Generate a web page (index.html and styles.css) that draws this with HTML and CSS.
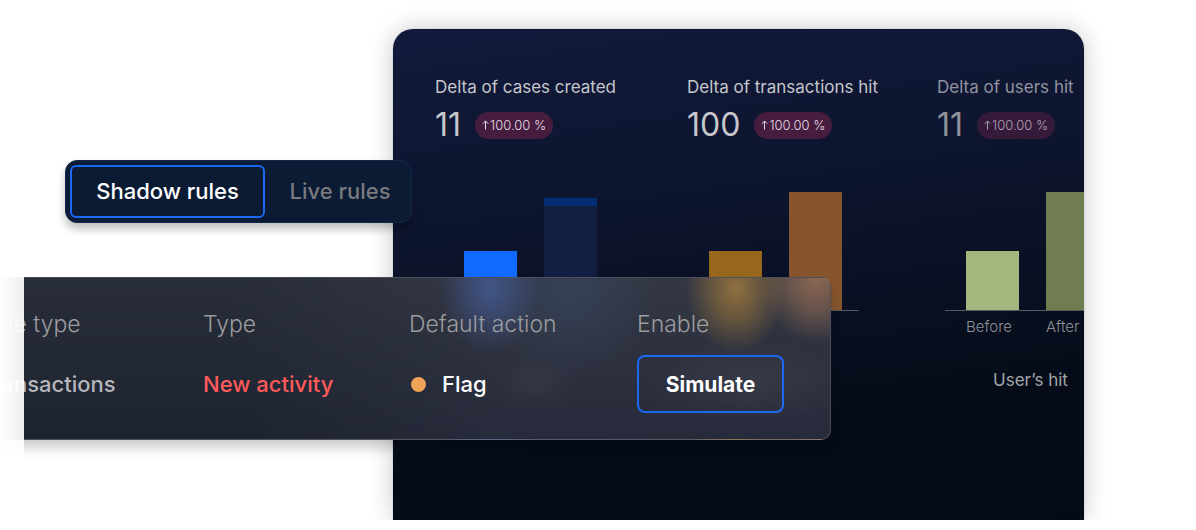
FILE: index.html
```html
<!DOCTYPE html>
<html lang="en">
<head>
    <meta charset="UTF-8">
    <meta name="viewport" content="width=device-width, initial-scale=1.0">
    <title>Shadow rules</title>
    <link rel="stylesheet" href="styles.css">
</head>
<body>

    <div class="hero">
        <!-- Simulation results -->
        <section class="panel">
            <div class="stats">
                <div class="stat">
                    <h2>Delta of cases created</h2>
                    <div class="stat-row">
                        <span class="stat-value">11</span>
                        <span class="badge"><svg viewBox="0 0 7 10" aria-hidden="true"><path d="M3.500 9.500V1M.7 3.800L3.500 1l2.800 2.800"/></svg>100.00 %</span>
                    </div>
                </div>
                <div class="stat">
                    <h2>Delta of transactions hit</h2>
                    <div class="stat-row">
                        <span class="stat-value">100</span>
                        <span class="badge"><svg viewBox="0 0 7 10" aria-hidden="true"><path d="M3.500 9.500V1M.7 3.800L3.500 1l2.800 2.800"/></svg>100.00 %</span>
                    </div>
                </div>
                <div class="stat faded">
                    <h2>Delta of users hit</h2>
                    <div class="stat-row">
                        <span class="stat-value">11</span>
                        <span class="badge"><svg viewBox="0 0 7 10" aria-hidden="true"><path d="M3.500 9.500V1M.7 3.800L3.500 1l2.800 2.800"/></svg>100.00 %</span>
                    </div>
                </div>
            </div>

            <div class="charts">
                <div class="chart">
                    <div class="bars">
                        <div class="bar blue" style="height: 50%"></div>
                        <div class="bar navy" style="height: 95%"></div>
                    </div>
                </div>
                <div class="chart">
                    <div class="bars">
                        <div class="bar amber" style="height: 50%"></div>
                        <div class="bar brown" style="height: 100%"></div>
                    </div>
                </div>
                <div class="chart">
                    <div class="bars">
                        <div class="bar green" style="height: 50%"></div>
                        <div class="bar olive" style="height: 100%"></div>
                    </div>
                    <div class="labels">
                        <span>Before</span>
                        <span>After</span>
                    </div>
                    <p class="caption">User’s hit</p>
                </div>
            </div>
        </section>

        <!-- Rule row over the panel -->
        <div class="rule-card">
            <table>
                <colgroup>
                    <col class="col-rule">
                    <col class="col-type">
                    <col class="col-action">
                    <col>
                </colgroup>
                <thead>
                    <tr>
                        <th>Rule type</th>
                        <th>Type</th>
                        <th>Default action</th>
                        <th>Enable</th>
                    </tr>
                </thead>
                <tbody>
                    <tr>
                        <td class="muted">Transactions</td>
                        <td class="new">New activity</td>
                        <td><span class="flag">Flag</span></td>
                        <td><button class="simulate" type="button">Simulate</button></td>
                    </tr>
                </tbody>
            </table>
        </div>
        <div class="edge-fade"></div>

        <div class="tabs">
            <button class="tab active" type="button">Shadow rules</button>
            <button class="tab" type="button">Live rules</button>
        </div>
    </div>

</body>
</html>
```
FILE: styles.css
```css
* {
    box-sizing: border-box;
}

body {
    margin: 0;
    background-color: #fff;
    font-family: "Inter", "Liberation Sans", sans-serif;
    color: #c6c7cc;
}

button {
    font-family: inherit;
    background: none;
    cursor: pointer;
}

.hero {
    position: relative;
    padding: 29px 112px 0 393px;
    overflow: hidden;
}

/* Results panel */
.panel {
    min-height: 491px;
    padding: 46px 0 0 42px;
    overflow: hidden;
    border-radius: 20px 20px 0 0;
    background: linear-gradient(172deg, #111a3b 0%, #0d142d 38%, #050c18 76%, #050b16 100%);
    box-shadow: 0 0 1px #7d8490, 0 0 24px rgba(0, 0, 0, 0.22);
}

.stats {
    display: grid;
    grid-template-columns: 252px 250px 1fr;
}

.stat h2 {
    margin: 0 0 9px;
    font-size: 17px;
    line-height: 24px;
    font-weight: 400;
    white-space: nowrap;
}

.stat-row {
    display: flex;
    align-items: center;
    gap: 14px;
    height: 34px;
}

.stat-value {
    font-size: 32px;
    line-height: 34px;
    font-weight: 400;
}

.badge {
    display: flex;
    align-items: center;
    gap: 1px;
    height: 27px;
    padding: 0 7px;
    border-radius: 14px;
    background-color: #471d3f;
    color: #e4dce4;
    font-size: 13px;
    font-weight: 300;
    white-space: nowrap;
}

.badge svg {
    width: 7px;
    height: 10px;
    fill: none;
    stroke: currentColor;
}

.faded {
    opacity: 0.7;
}

/* Charts */
.charts {
    display: grid;
    grid-template-columns: 245px 257px 171px;
    padding: 50px 0 0 8px;
}

.chart {
    width: 171px;
}

.bars {
    display: flex;
    align-items: flex-end;
    gap: 27px;
    height: 119px;
    padding-left: 21px;
    border-bottom: 1px solid #55585f;
}

.bar {
    width: 53px;
}

.blue {
    background-color: #116bff;
}

.navy {
    background-color: #131f42;
    border-top: 8px solid #062e74;
}

.amber {
    background-color: #96671c;
}

.brown {
    background-color: #87552d;
}

.green {
    background-color: #a4b67d;
}

.olive {
    background-color: #6f7d50;
}

.labels {
    display: grid;
    grid-template-columns: 53px 53px;
    gap: 27px;
    padding: 6px 0 0 21px;
    font-size: 15px;
    line-height: 20px;
    font-weight: 300;
    color: #8f9299;
}

.caption {
    margin: 31px 0 0;
    font-size: 17px;
    line-height: 24px;
    text-align: center;
    color: #a2a4a8;
}

.rule-card {
    position: absolute;
    top: 277px;
    left: -21px;
    right: 365px;
    height: 163px;
    padding: 16px 0 0;
    border: 1px solid rgba(150, 150, 155, 0.35);
    border-radius: 10px;
    background:
        radial-gradient(50px 65px at 510px 10px, rgba(72, 98, 165, 0.7), rgba(72, 98, 165, 0.4) 45%, transparent),
        radial-gradient(85px 90px at 590px 10px, rgba(56, 72, 100, 0.6), transparent),
        radial-gradient(50px 65px at 756px 10px, rgba(160, 122, 60, 0.85), rgba(160, 122, 60, 0.5) 45%, transparent),
        radial-gradient(55px 65px at 836px 0, rgba(155, 112, 84, 0.85), rgba(155, 112, 84, 0.5) 50%, transparent),
        radial-gradient(40px 30px at 555px 104px, rgba(255, 255, 255, 0.04), transparent),
        radial-gradient(110px 40px at 770px 104px, rgba(255, 255, 255, 0.05), transparent),
        linear-gradient(90deg, rgba(28, 36, 48, 0.4) 30%, rgba(58, 62, 80, 0.3) 60%),
        linear-gradient(#30343e, #1e2231);
    box-shadow: 0 8px 12px rgba(0, 0, 0, 0.2);
}

.rule-card table {
    width: 100%;
    table-layout: fixed;
    border-collapse: collapse;
}

.col-rule {
    width: 223px;
}

.col-type {
    width: 206px;
}

.col-action {
    width: 228px;
}

.rule-card th,
.rule-card td {
    height: 60px;
    padding: 0;
    font-size: 22px;
    line-height: 32px;
    text-align: left;
    white-space: nowrap;
}

.rule-card th {
    font-size: 23px;
    font-weight: 300;
    color: #9b9c9f;
}

.rule-card td {
    font-weight: 500;
    color: #fff;
}

.rule-card .muted {
    color: #b4b6bb;
}

.rule-card .new {
    color: #fd5a5a;
}

.flag {
    display: flex;
    align-items: center;
    gap: 16px;
    padding-left: 2px;
}

.flag::before {
    content: "";
    width: 15px;
    height: 15px;
    border-radius: 50%;
    background-color: #eea356;
}

.simulate {
    display: block;
    width: 147px;
    height: 58px;
    padding: 0;
    border: 2px solid #1b68f5;
    border-radius: 8px;
    color: #fff;
    font-size: 21px;
    font-weight: 700;
}

.edge-fade {
    position: absolute;
    top: 0;
    bottom: 0;
    left: 0;
    width: 24px;
    background: linear-gradient(90deg, #fff, rgba(255, 255, 255, 0.92));
}

/* Tabs */
.tabs {
    position: absolute;
    top: 160px;
    left: 65px;
    display: flex;
    width: 347px;
    padding: 4px;
    border: 1px solid #11294b;
    border-radius: 12px;
    background-color: #0b1b34;
    box-shadow: 0 6px 8px rgba(0, 0, 0, 0.25);
}

.tab {
    flex: 1;
    height: 53px;
    padding: 0 0 2px 8px;
    border: 0;
    color: #77797d;
    font-size: 22px;
    font-weight: 500;
    white-space: nowrap;
}

.tab.active {
    flex: 0 0 195px;
    padding-left: 0;
    border: 2px solid #1b68f5;
    border-radius: 6px;
    color: #fff;
}
```
